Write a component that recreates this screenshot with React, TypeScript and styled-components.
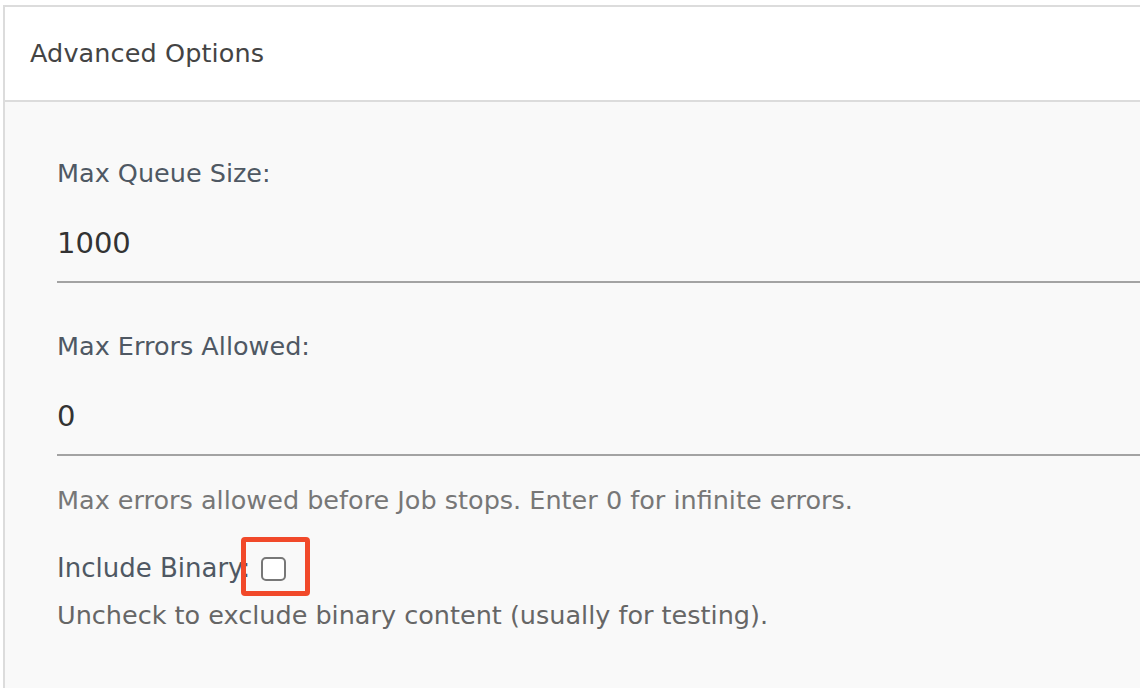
import React from "react"
import styled, { createGlobalStyle } from "styled-components"

const GlobalStyle = createGlobalStyle`
	html, body {
		margin: 0;
		padding: 0;
		background: #ffffff;
		font-family: "DejaVu Sans", "Liberation Sans", sans-serif;
		overflow: hidden;
	}
`

const Page = styled.div`
	padding: 5px 0 0 3px;
	height: 688px;
	box-sizing: border-box;
`

const Panel = styled.section`
	border-top: 2px solid #dcdcdc;
	border-left: 2px solid #dcdcdc;
	height: 100%;
	display: flex;
	flex-direction: column;
`

const PanelHeader = styled.header`
	height: 95px;
	padding: 0 0 2px 25px;
	box-sizing: border-box;
	display: flex;
	align-items: center;
	background: #ffffff;
	border-bottom: 2px solid #dcdcdc;
	font-size: 25.5px;
	color: #444444;
	letter-spacing: 0.1px;
`

const PanelBody = styled.div`
	flex: 1;
	background: #f9f9f9;
	padding: 55px 0 0 52px;
	display: flex;
	flex-direction: column;
`

const Field = styled.div<{ $gap?: number }>`
	display: flex;
	flex-direction: column;
	margin-top: ${(p) => p.$gap ?? 0}px;
`

const Label = styled.label`
	font-size: 25.5px;
	line-height: 32px;
	color: #4f5863;
`

const TextInput = styled.input`
	margin-top: 34px;
	height: 60px;
	padding: 0 0 18px 0;
	box-sizing: border-box;
	border: none;
	border-bottom: 2px solid #a3a3a3;
	background: transparent;
	font-family: inherit;
	font-size: 29px;
	line-height: 40px;
	color: #333333;
	outline: none;
`

const HelpText = styled.p<{ $tone?: string; $gap: number }>`
	margin: ${(p) => p.$gap}px 0 0 0;
	font-size: 25.5px;
	line-height: 32px;
	color: ${(p) => p.$tone ?? "#777777"};
`

const CheckRow = styled.div`
	margin-top: 36px;
	height: 32px;
	display: flex;
	align-items: center;
	font-size: 26px;
	color: #4f5863;
`

const CheckWrap = styled.span`
	position: relative;
	margin-left: 11px;
	margin-top: 1px;
	display: inline-flex;
`

const CheckBox = styled.input.attrs({ type: "checkbox" })`
	appearance: none;
	margin: 0;
	width: 25px;
	height: 24px;
	border: 2px solid #777777;
	border-radius: 5px;
	background: #ffffff;
	box-sizing: border-box;
`

const Highlight = styled.span`
	position: absolute;
	left: -20px;
	top: -20px;
	width: 69px;
	height: 59px;
	box-sizing: border-box;
	border: 5px solid #f1492a;
	border-radius: 4px;
	pointer-events: none;
`

export default function App() {
	return (
		<>
			<GlobalStyle />
			<Page>
				<Panel>
					<PanelHeader>Advanced Options</PanelHeader>
					<PanelBody>
						<Field>
							<Label htmlFor="max-queue">Max Queue Size:</Label>
							<TextInput id="max-queue" defaultValue="1000" />
						</Field>
						<Field $gap={47}>
							<Label htmlFor="max-errors">Max Errors Allowed:</Label>
							<TextInput id="max-errors" defaultValue="0" />
						</Field>
						<HelpText $gap={28}>Max errors allowed before Job stops. Enter 0 for infinite errors.</HelpText>
						<CheckRow>
							<span>Include Binary:</span>
							<CheckWrap>
								<CheckBox id="include-binary" />
								<Highlight />
							</CheckWrap>
						</CheckRow>
						<HelpText $gap={15} $tone="#666666">
							Uncheck to exclude binary content (usually for testing).
						</HelpText>
					</PanelBody>
				</Panel>
			</Page>
		</>
	)
}
